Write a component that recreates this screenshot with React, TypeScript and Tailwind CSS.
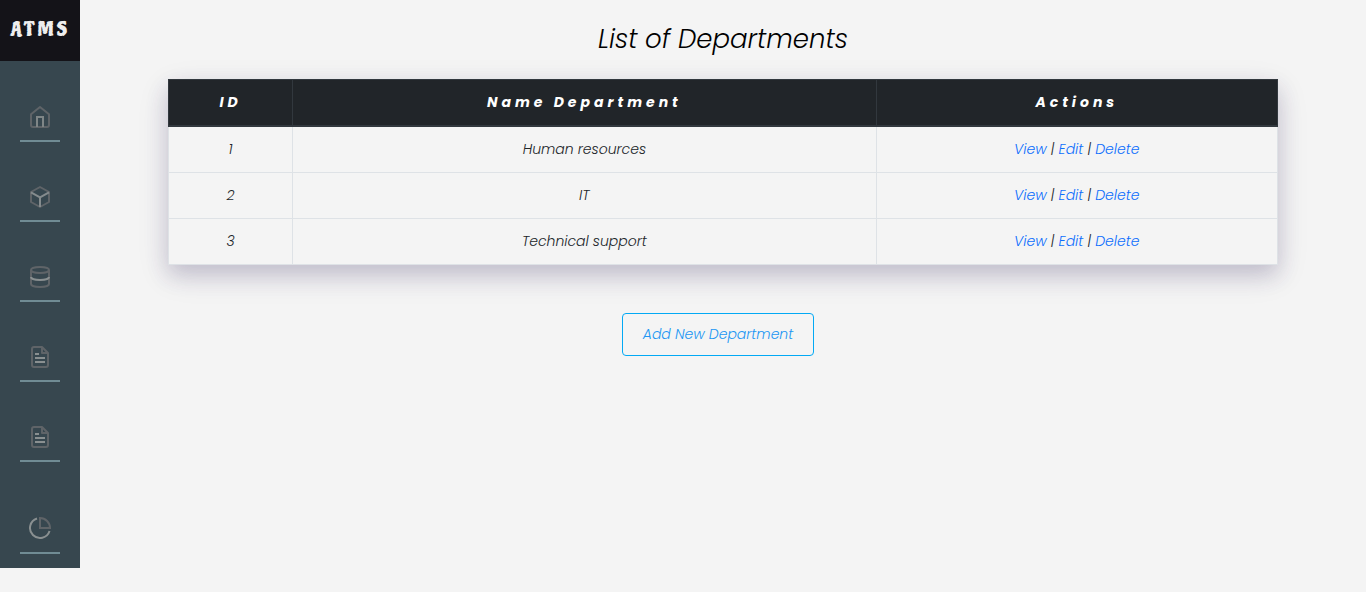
import React from "react";

type IconName = "home" | "box" | "database" | "file" | "chart";

function NavIcon({ name }: { name: IconName }) {
  return (
    <svg
      viewBox="0 0 24 24"
      className="size-6"
      fill="none"
      stroke="#5f6468"
      strokeWidth="2"
      strokeLinejoin="round"
      aria-hidden="true"
    >
      {name === "home" && (
        <>
          <path d="M3 9.3 12 2l9 7.300V20a2 2 0 0 1-2 2H5a2 2 0 0 1-2-2z" />
          <path d="M9 22V12h6v10" stroke="#7f8687" strokeLinejoin="miter" />
        </>
      )}
      {name === "box" && (
        <>
          <path d="M12 2 21 7v10l-9 5-9-5V7z" />
          <path d="m3 7.300 9 5 9-5M12 12.300V22" stroke="#858b8d" />
        </>
      )}
      {name === "database" && (
        <>
          <ellipse cx="12" cy="5" rx="9" ry="3" />
          <path d="M3 5v14c0 1.660 4.030 3 9 3s9-1.340 9-3V5" />
          <path d="M3 12c0 1.660 4.030 3 9 3s9-1.340 9-3" stroke="#8a9091" />
        </>
      )}
      {name === "file" && (
        <>
          <path d="M14 2H6a2 2 0 0 0-2 2v16a2 2 0 0 0 2 2h12a2 2 0 0 0 2-2V8z" />
          <path d="M14 2v6h6" />
          <path d="M7 9h4M7 13h10M7 17h10" stroke="#8a9091" />
        </>
      )}
      {name === "chart" && (
        <>
          <path d="M12 1v10h10A10 10 0 0 0 12 1z" strokeLinejoin="miter" />
          <path d="M9 1.460A10 10 0 1 0 21.540 14" stroke="#8a9091" />
        </>
      )}
    </svg>
  );
}

function NavItem({ name, label }: { name: IconName; label: string }) {
  return (
    <a
      href="#"
      aria-label={label}
      className="flex h-20 w-10 flex-col items-center justify-end border-b-2 border-[#708c94] pb-[11px]"
    >
      <NavIcon name={name} />
    </a>
  );
}

const departments = [
  { id: 1, name: "Human resources" },
  { id: 2, name: "IT" },
  { id: 3, name: "Technical support" },
];

const link = "text-[#0d6efd] hover:underline";

export default function App() {
  return (
    <div className="flex min-h-screen items-start bg-[#f4f4f4] font-['Poppins','Inter',sans-serif] text-sm leading-[21px] font-light text-[#212529]">
      <aside className="w-20 shrink-0 bg-[#37474f] pb-3.5">
        <a
          href="#"
          className="flex h-[61px] items-center justify-center bg-[#141318] pb-0.5 font-['Piedra','Ranchers','Liberation_Sans_Narrow','Open_Sans',sans-serif] text-xl font-normal tracking-[3px] text-[#eeeeee]"
        >
          ATMS
        </a>
        <nav aria-label="Main" className="flex flex-col items-center">
          <div className="mt-px flex flex-col">
            <NavItem name="home" label="Home" />
            <NavItem name="box" label="Projects" />
            <NavItem name="database" label="Data" />
            <NavItem name="file" label="Reports" />
            <NavItem name="file" label="Documents" />
          </div>
          <div className="mt-3">
            <NavItem name="chart" label="Statistics" />
          </div>
        </nav>
      </aside>

      <main className="min-w-0 flex-1">
        <div className="mx-auto max-w-[1140px] px-[15px] text-center italic">
          <h1 className="pt-5 pb-5 text-[26px] leading-[39px] text-black">
            List of Departments
          </h1>
          <table className="w-full table-fixed border-collapse shadow-[0_10px_20px_rgba(55,45,95,0.18),0_10px_30px_rgba(55,45,95,0.12)]">
            <colgroup>
              <col className="w-[11.2%]" />
              <col className="w-[52.6%]" />
              <col className="w-[36.2%]" />
            </colgroup>
            <thead>
              <tr>
                {["ID", "Name Department", "Actions"].map((title) => (
                  <th
                    key={title}
                    scope="col"
                    className="border border-b-2 border-[#32383e] bg-[#212529] p-3 font-bold tracking-[4px] text-white"
                  >
                    {title}
                  </th>
                ))}
              </tr>
            </thead>
            <tbody>
              {departments.map((d) => (
                <tr key={d.id}>
                  <td className="border border-[#dee2e6] bg-[#f4f4f4] p-3">{d.id}</td>
                  <td className="border border-[#dee2e6] bg-[#f4f4f4] p-3">{d.name}</td>
                  <td className="border border-[#dee2e6] bg-[#f4f4f4] p-3">
                    <a href="#" className={link}>View</a> |{" "}
                    <a href="#" className={link}>Edit</a> |{" "}
                    <a href="#" className={link}>Delete</a>
                  </td>
                </tr>
              ))}
            </tbody>
          </table>
          <button
            type="button"
            className="mt-12 mr-2.5 cursor-pointer rounded border border-[#03a9f4] px-5 py-2.5 text-[#2196f3] italic"
          >
            Add New Department
          </button>
        </div>
      </main>
    </div>
  );
}
